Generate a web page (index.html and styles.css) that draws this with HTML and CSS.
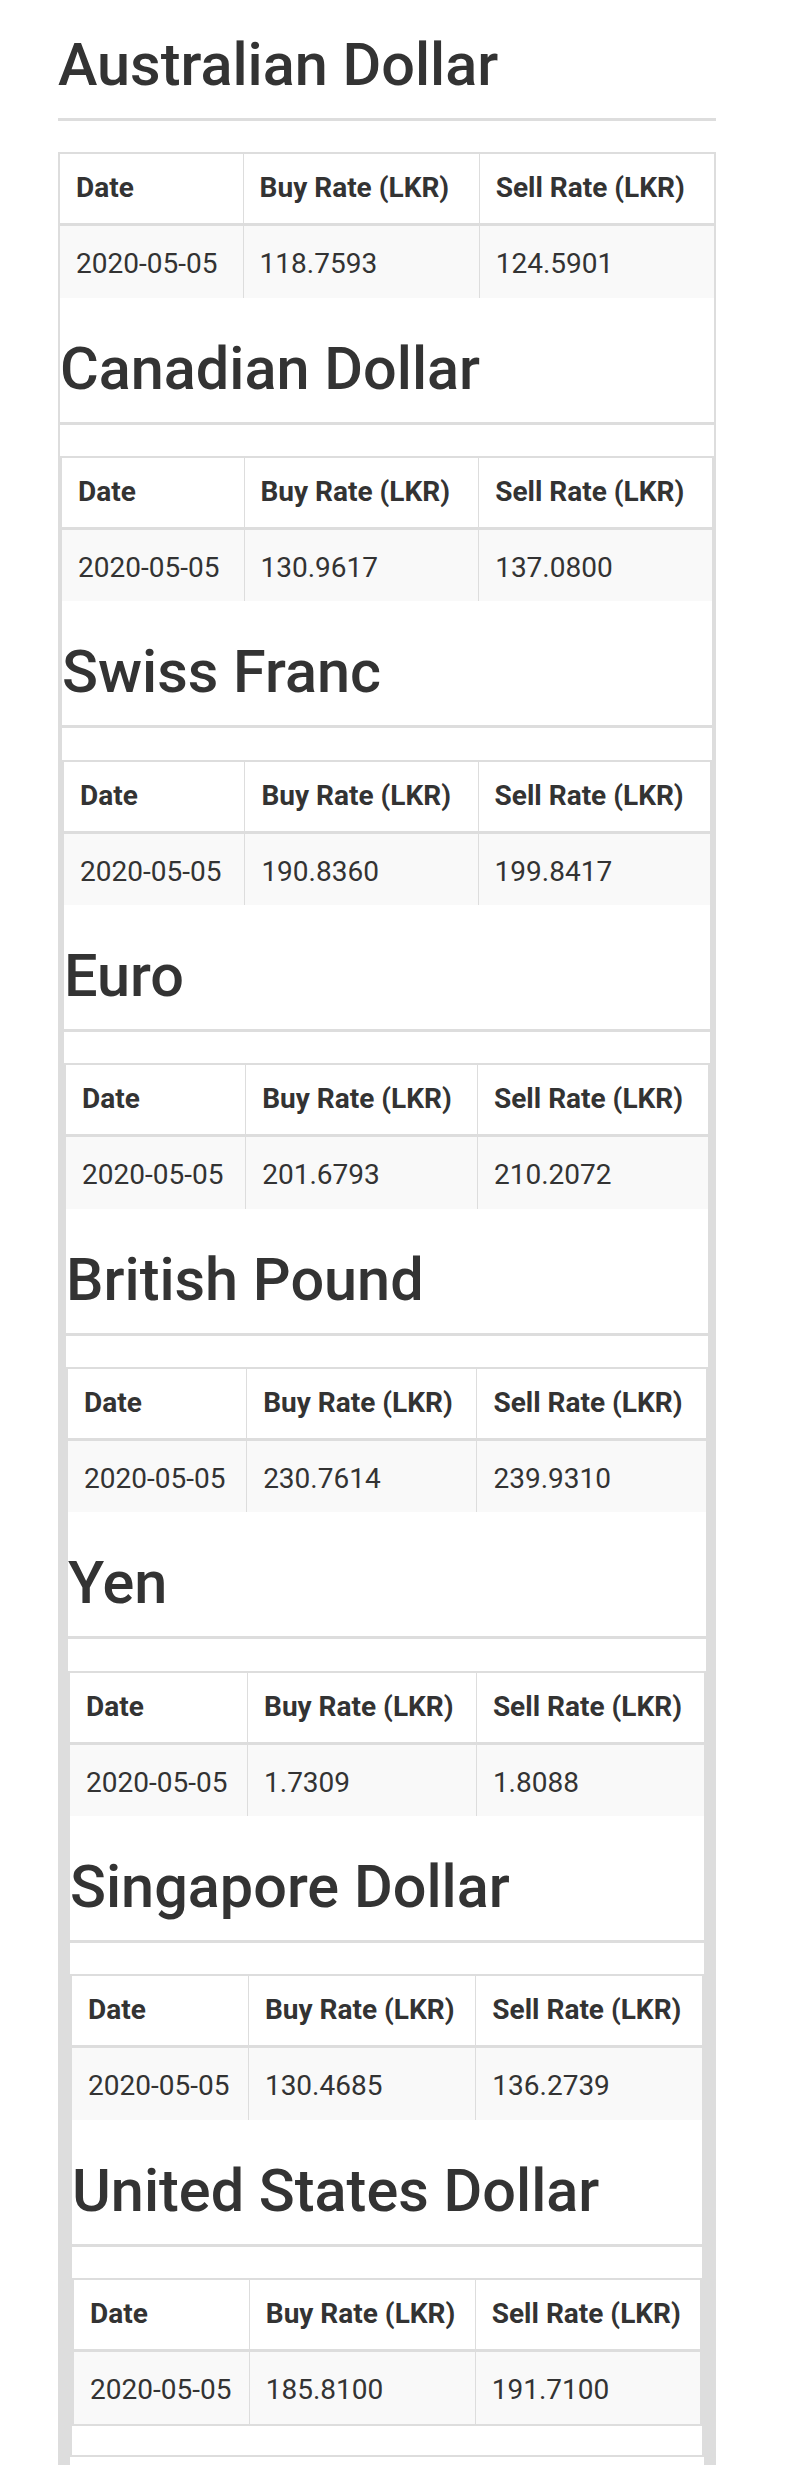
FILE: index.html
```html
<!DOCTYPE html>
<html lang="en">
<head>
<meta charset="utf-8">
<title>Exchange Rates</title>
<link rel="stylesheet" href="styles.css">
</head>
<body>
<div class="page">
  <h2 class="cur-title cur-title--first">Australian Dollar</h2>
  <div class="rate-box">
    <table class="rates">
      <thead><tr><th class="c-date">Date</th><th class="c-buy">Buy Rate (LKR)</th><th class="c-sell">Sell Rate (LKR)</th></tr></thead>
      <tbody><tr><td>2020-05-05</td><td>118.7593</td><td>124.5901</td></tr></tbody>
    </table>
    <h2 class="cur-title">Canadian Dollar</h2>
    <div class="rate-box">
      <table class="rates">
        <thead><tr><th class="c-date">Date</th><th class="c-buy">Buy Rate (LKR)</th><th class="c-sell">Sell Rate (LKR)</th></tr></thead>
        <tbody><tr><td>2020-05-05</td><td>130.9617</td><td>137.0800</td></tr></tbody>
      </table>
      <h2 class="cur-title">Swiss Franc</h2>
      <div class="rate-box">
        <table class="rates">
          <thead><tr><th class="c-date">Date</th><th class="c-buy">Buy Rate (LKR)</th><th class="c-sell">Sell Rate (LKR)</th></tr></thead>
          <tbody><tr><td>2020-05-05</td><td>190.8360</td><td>199.8417</td></tr></tbody>
        </table>
        <h2 class="cur-title">Euro</h2>
        <div class="rate-box">
          <table class="rates">
            <thead><tr><th class="c-date">Date</th><th class="c-buy">Buy Rate (LKR)</th><th class="c-sell">Sell Rate (LKR)</th></tr></thead>
            <tbody><tr><td>2020-05-05</td><td>201.6793</td><td>210.2072</td></tr></tbody>
          </table>
          <h2 class="cur-title">British Pound</h2>
          <div class="rate-box">
            <table class="rates">
              <thead><tr><th class="c-date">Date</th><th class="c-buy">Buy Rate (LKR)</th><th class="c-sell">Sell Rate (LKR)</th></tr></thead>
              <tbody><tr><td>2020-05-05</td><td>230.7614</td><td>239.9310</td></tr></tbody>
            </table>
            <h2 class="cur-title">Yen</h2>
            <div class="rate-box">
              <table class="rates">
                <thead><tr><th class="c-date">Date</th><th class="c-buy">Buy Rate (LKR)</th><th class="c-sell">Sell Rate (LKR)</th></tr></thead>
                <tbody><tr><td>2020-05-05</td><td>1.7309</td><td>1.8088</td></tr></tbody>
              </table>
              <h2 class="cur-title">Singapore Dollar</h2>
              <div class="rate-box">
                <table class="rates">
                  <thead><tr><th class="c-date">Date</th><th class="c-buy">Buy Rate (LKR)</th><th class="c-sell">Sell Rate (LKR)</th></tr></thead>
                  <tbody><tr><td>2020-05-05</td><td>130.4685</td><td>136.2739</td></tr></tbody>
                </table>
                <h2 class="cur-title">United States Dollar</h2>
                <div class="rate-box">
                  <table class="rates">
                    <thead><tr><th class="c-date">Date</th><th class="c-buy">Buy Rate (LKR)</th><th class="c-sell">Sell Rate (LKR)</th></tr></thead>
                    <tbody><tr><td>2020-05-05</td><td>185.8100</td><td>191.7100</td></tr></tbody>
                  </table>
                </div>
              </div>
            </div>
          </div>
        </div>
      </div>
    </div>
  </div>
</div>
</body>
</html>
```

FILE: styles.css
```css
html, body {
  margin: 0;
  padding: 0;
  background: #ffffff;
}

body {
  font-family: Roboto, "Liberation Sans", Arial, sans-serif;
  color: #333333;
}

.page {
  width: 658px;
  margin-left: 58px;
  padding-bottom: 200px;
}

.cur-title {
  margin: 0 0 31.2px 0;
  padding: 35px 0 17px 0;
  font-size: 59.4px;
  font-weight: 500;
  line-height: 72px;
  color: #333333;
  border-bottom: 3px solid #dddddd;
  white-space: nowrap;
}

.cur-title--first {
  padding-top: 29px;
}

.rate-box {
  border: 2px solid #dddddd;
  margin-bottom: 29px;
  background: #ffffff;
}

.rates {
  width: 100%;
  border-collapse: collapse;
  border-spacing: 0;
  table-layout: fixed;
  font-size: 28px;
}

.rates .c-date { width: 28%; }
.rates .c-buy { width: 36.1%; }
.rates .c-sell { width: 35.9%; }

.rates th,
.rates td {
  text-align: left;
  border-left: 1px solid #dddddd;
  white-space: nowrap;
}

.rates th:first-child,
.rates td:first-child {
  border-left: none;
}

.rates th {
  font-weight: 700;
  padding: 14px 16px 15px 16px;
  line-height: 40px;
  height: 69px;
  box-sizing: border-box;
  border-bottom: 3px solid #dddddd;
  background: #ffffff;
}

.rates td {
  font-weight: 400;
  padding: 17px 16px 13px 16px;
  line-height: 41.5px;
  height: 71.5px;
  box-sizing: border-box;
  background: #f9f9f9;
}
```
